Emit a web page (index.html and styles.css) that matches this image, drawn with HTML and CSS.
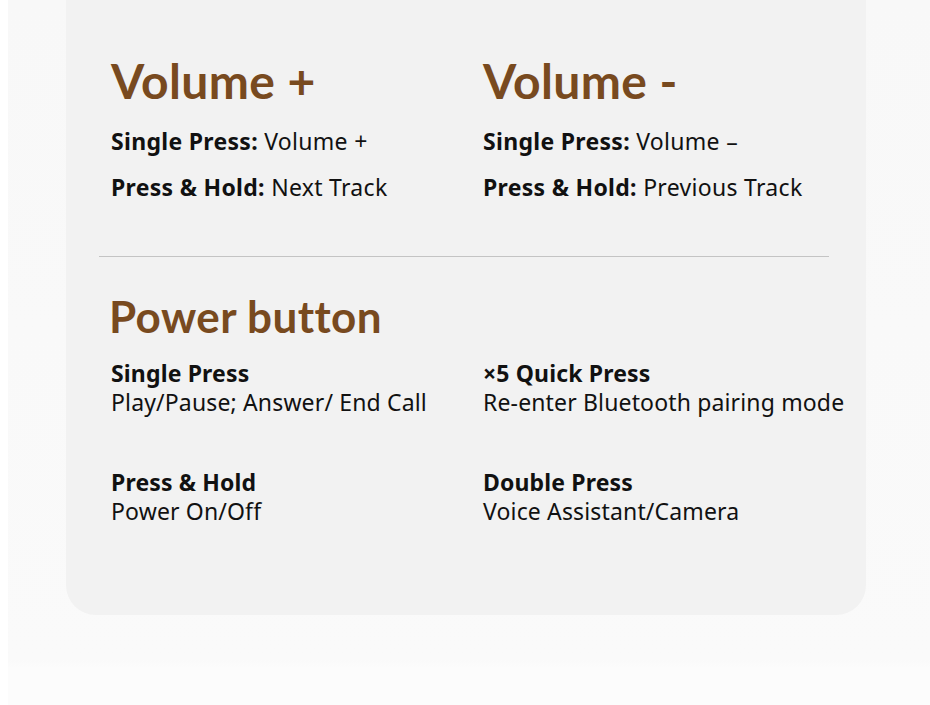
FILE: index.html
```html
<!DOCTYPE html>
<html lang="en">
<head>
<meta charset="utf-8">
<title>Button controls</title>
<link rel="stylesheet" href="styles.css">
</head>
<body>
<div class="page">
  <div class="card">
    <div class="grid top">
      <div class="col">
        <h2 class="title">Volume +</h2>
        <p class="line"><b>Single Press:</b> Volume +</p>
        <p class="line"><b>Press &amp; Hold:</b> Next Track</p>
      </div>
      <div class="col">
        <h2 class="title">Volume -</h2>
        <p class="line"><b>Single Press:</b> Volume &#8211;</p>
        <p class="line"><b>Press &amp; Hold:</b> Previous Track</p>
      </div>
    </div>
    <hr class="sep">
    <h2 class="title power">Power button</h2>
    <div class="grid items">
      <div class="item"><b>Single Press</b><span>Play/Pause; Answer/ End Call</span></div>
      <div class="item"><b>×5 Quick Press</b><span>Re-enter Bluetooth pairing mode</span></div>
      <div class="item"><b>Press &amp; Hold</b><span>Power On/Off</span></div>
      <div class="item"><b>Double Press</b><span>Voice Assistant/Camera</span></div>
    </div>
  </div>
</div>
</body>
</html>
```

FILE: styles.css
```css
html, body {
  margin: 0;
  padding: 0;
  background: #ffffff;
}
body {
  font-family: "Noto Sans", "Open Sans", sans-serif;
  color: #111111;
  width: 930px;
  height: 705px;
  overflow: hidden;
}
.page {
  margin-left: 8px;
  height: 705px;
  background: linear-gradient(#f8f8f8 0, #fafafa 660px, #fcfcfc 668px, #fcfcfc 100%);
  overflow: hidden;
}
.card {
  margin-left: 58px;
  width: 800px;
  height: 615px;
  background: #f2f2f2;
  border-radius: 0 0 30px 30px;
  box-sizing: border-box;
  padding-top: 53px;
}
.grid {
  display: grid;
  grid-template-columns: 372px 1fr;
  padding-left: 45px;
}
.title {
  margin: 0;
  font-family: Lato, "Noto Sans", sans-serif;
  font-size: 48px;
  font-weight: 700;
  color: #784a1f;
  line-height: 56px;
  letter-spacing: 0.4px;
  font-variant-ligatures: none;
}
.line {
  margin: 0;
  font-size: 23px;
  line-height: 46px;
  letter-spacing: 0.3px;
}
.top .title {
  margin-bottom: 9px;
}
.line b, .item b {
  font-weight: 700;
}
.sep {
  margin: 46px 37px 0 33px;
  border: 0;
  height: 1px;
  background: #c4c4c4;
}
.power {
  font-size: 44px;
  line-height: 52px;
  padding-left: 43px;
  margin-top: 33px;
}
.items {
  margin-top: 17px;
  row-gap: 51px;
}
.item {
  display: flex;
  flex-direction: column;
  font-size: 23px;
  line-height: 29px;
  letter-spacing: 0.15px;
}
```
